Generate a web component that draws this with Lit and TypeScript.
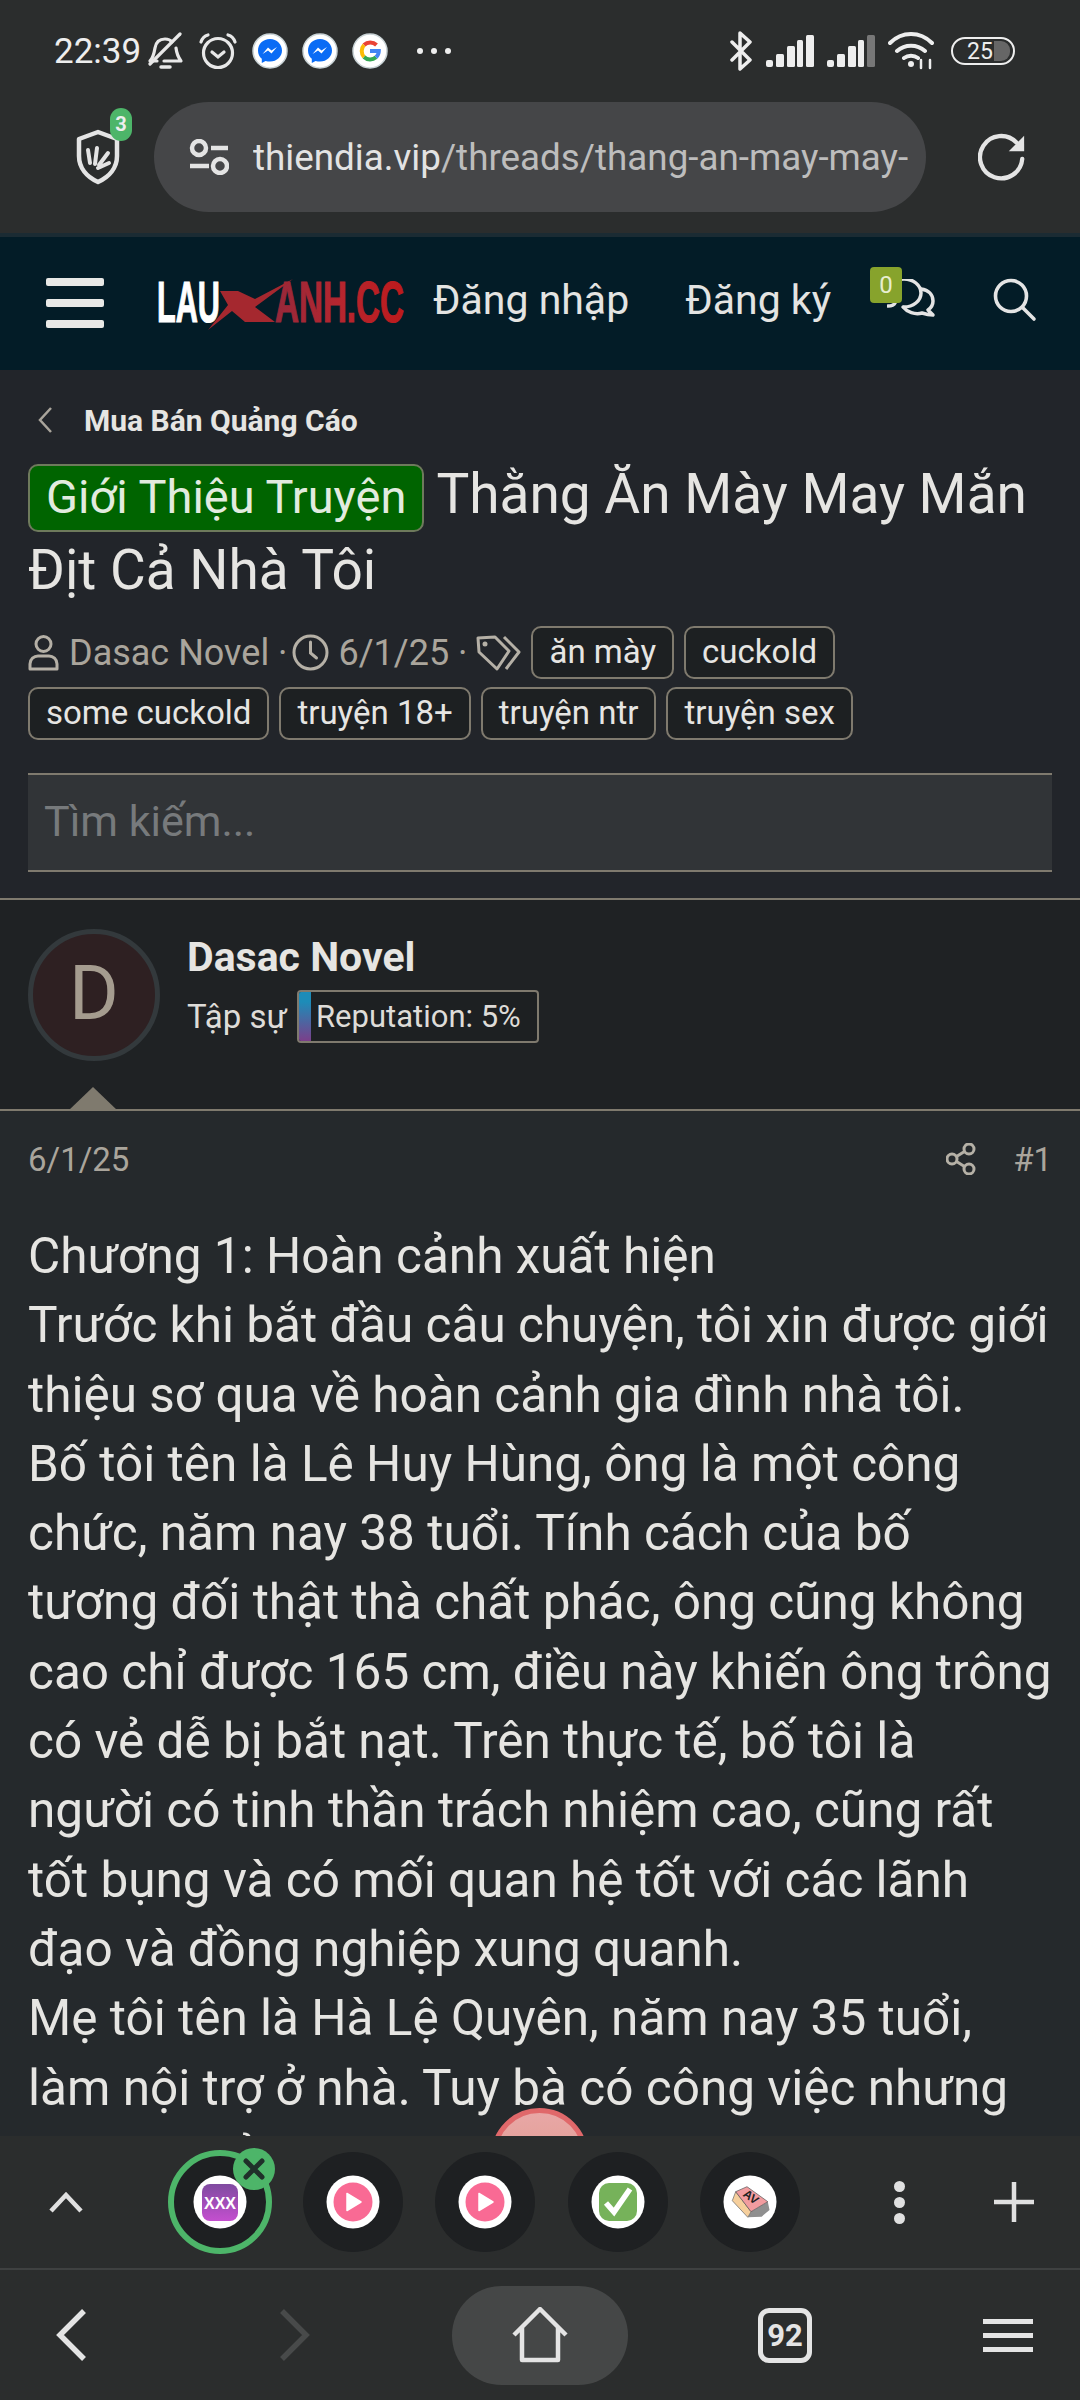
import { LitElement, html, css, svg } from "lit";
import { customElement } from "lit/decorators.js";

const messenger = svg`<svg class="nico" viewBox="0 0 36 36"><circle cx="18" cy="18" r="17" fill="#fff" stroke="#c9d3d6" stroke-width="1.5"/><path d="M18 6C11 6 6 11 6 17.500c0 3.500 1.400 6.300 3.800 8.300V30l3.800-2.100c1.400.4 2.900.6 4.400.6 7 0 12-5 12-11S25 6 18 6z" fill="#0a6cf5"/><path d="M10.500 21l5.500-6.500 3.500 3 5.500-3.500-5.500 6.500-3.500-3z" fill="#fff"/></svg>`;

const pinkTab = svg`<svg class="tabico" viewBox="0 0 54 54"><circle cx="27" cy="27" r="26.500" fill="#fff"/><circle cx="27" cy="27" r="19.500" fill="#f96a94"/><path d="M21 18.500v17l14-8.500z" fill="#fff" stroke="#fff" stroke-width="1.500" stroke-linejoin="round"/></svg>`;

@customElement("app-root")
export class AppRoot extends LitElement {
  static styles = css`
    :host { display: block; width: 1080px; height: 2400px; overflow: hidden; font-family: Roboto, "Noto Sans", sans-serif; color: #e7e6e3; background: #25292c; }
    svg { display: block; flex: none; }
    .page { position: relative; display: flex; flex-direction: column; height: 2400px; }
    .top { background: #2b2d2d; flex: none; height: 237px; box-sizing: border-box; border-bottom: 4px solid #1b2b33; }
    .status { height: 102px; padding: 0 0 0 54px; display: flex; align-items: center; box-sizing: border-box; color: #eee; }
    .time { font-size: 35px; width: 94px; flex: none; }
    .sleft { display: flex; align-items: center; gap: 14px; }
    .sleft .nico { width: 36px; height: 36px; }
    .dots { display: flex; gap: 8px; margin-left: 29px; }
    .dots i { width: 6px; height: 6px; border-radius: 50%; background: #eee; }
    .sright { margin-left: auto; margin-right: 65px; display: flex; align-items: center; gap: 13px; }
    .batt { width: 64px; height: 28px; box-sizing: border-box; border: 2px solid #eee; border-radius: 14px; position: relative; font-size: 23px; line-height: 25px; padding-left: 14px; overflow: hidden; margin-left: 4px; }
    .batt b { position: absolute; right: 3px; top: 2px; width: 16px; height: 20px; background: #666; border-radius: 0 9px 9px 0; }
    .urlrow { height: 131px; display: flex; align-items: flex-start; }
    .shield { position: relative; width: 154px; height: 110px; flex: none; }
    .shield svg { position: absolute; left: 76px; top: 27px; }
    .shield span { position: absolute; left: 110px; top: 6px; width: 22px; height: 33px; border-radius: 11px; background: #4db569; font-size: 20px; font-weight: 700; text-align: center; line-height: 33px; color: #eee; }
    .pill { width: 772px; height: 110px; border-radius: 55px; background: #454648; display: flex; align-items: center; padding-left: 35px; box-sizing: border-box; overflow: hidden; flex: none; }
    .url { margin-left: 24px; font-size: 36.800px; color: #bdbdbd; white-space: nowrap; width: 655px; flex: none; overflow: hidden; }
    .url b { font-weight: 400; color: #e3e3e3; }
    .reload { margin: 30px 0 0 52px; }

    .nav { flex: none; height: 133px; background: #031c27; display: flex; align-items: center; position: relative; }
    .burger { margin-left: 46px; width: 58px; display: flex; flex-direction: column; gap: 13px; margin-top: -1px; flex: none; }
    .burger i { height: 8px; border-radius: 2px; background: #e8e8e6; }
    .logo { margin-left: 53px; }
    .logo text { stroke-width: 1.200px; }
    .navlink { font-size: 41px; color: #e4e4e2; white-space: nowrap; flex: none; margin-bottom: 8px; }
    .l1 { margin-left: 29px; }
    .l2 { margin-left: 56px; }
    .chat { position: relative; margin-left: 56px; width: 50px; flex: none; margin-bottom: 9px; }
    .badge0 { position: absolute; left: -17px; top: -12px; width: 32px; height: 36px; border-radius: 4px; background: #87a32c; color: #e8eed0; font-size: 24px; text-align: center; line-height: 36px; }
    .search { margin-left: 56px; margin-bottom: 8px; }

    .main { flex: 1; min-height: 0; overflow: hidden; display: flex; flex-direction: column; }
    .head { background: #22252a; padding: 30px 28px 0; height: 530px; box-sizing: border-box; flex: none; border-bottom: 2px solid #7f7a6e; }
    .crumb { display: flex; align-items: center; height: 40px; font-size: 30px; font-weight: 700; color: #e6e5e2; gap: 32px; padding-left: 10px; }
    h1 { margin: 16px 0 0; font-weight: 400; font-size: 55px; line-height: 76px; color: #e6e5e2; }
    .prefix { display: inline-block; height: 68px; line-height: 62px; box-sizing: border-box; font-size: 47px; padding: 0 16px; background: #006400; border: 2px solid #6e7a5c; border-radius: 10px; color: #e2ebdf; margin-right: 12px; vertical-align: 0; }
    .meta { display: flex; flex-wrap: wrap; gap: 8px 10px; margin-top: 18px; align-items: center; color: #aaa59c; font-size: 36px; }
    .mi { display: flex; align-items: center; white-space: nowrap; height: 52px; }
    .mi .who { margin-left: 10px; }
    .mi .clock { margin-left: 5px; }
    .mi .when { margin-left: 9px; }
    .mi .tagic { margin-left: 9px; }
    .tag { height: 53px; box-sizing: border-box; line-height: 47px; padding: 0 16px; border: 2px solid #7f7a6e; border-radius: 10px; background: #1d2022; color: #e6e5e2; font-size: 33px; white-space: nowrap; }
    .find { margin-top: 33px; height: 99px; box-sizing: border-box; background: #313437; border-top: 2px solid #7f7a6e; border-bottom: 2px solid #7f7a6e; font-size: 43px; color: #777a7c; line-height: 92px; padding-left: 16px; }

    .user { background: #1f2224; height: 211px; flex: none; box-sizing: border-box; border-bottom: 2px solid #7f7a6e; padding: 29px 28px 0; display: flex; gap: 27px; position: relative; }
    .avatar { width: 132px; height: 132px; border-radius: 50%; box-sizing: border-box; border: 5px solid #33393c; background: #2e2022; color: #a59c8f; font-size: 76px; line-height: 118px; text-align: center; flex: none; }
    .uname { font-size: 41px; font-weight: 700; line-height: 44px; margin-top: 6px; color: #e6e5e2; }
    .urow { display: flex; align-items: center; gap: 10px; font-size: 33px; margin-top: 11px; color: #dedcd8; }
    .rep { width: 242px; height: 53px; box-sizing: border-box; border: 2px solid #7f7a6e; border-radius: 4px; background: #1d2022; display: flex; align-items: center; font-size: 31px; overflow: hidden; white-space: nowrap; gap: 5px; }
    .rep i { width: 12px; height: 100%; background: linear-gradient(#1d8cb8 20%, #7b3f8a); flex: none; }
    .caret { position: absolute; left: 68px; bottom: -2px; width: 0; height: 0; border-left: 25px solid transparent; border-right: 25px solid transparent; border-bottom: 24px solid #7f7a6e; }

    .post { padding: 0 28px; flex: 1; background: #25292c; }
    .pmeta { height: 62px; margin-top: 17px; display: flex; align-items: center; font-size: 33px; color: #aaa59c; }
    .pmeta .share { margin-left: auto; margin-right: 37px; }
    .body { margin-top: 32px; font-size: 49.500px; line-height: 69.300px; color: #e6e5e2; }

    .bubble { position: absolute; left: 491px; top: 2108px; width: 97px; height: 97px; box-sizing: border-box; border-radius: 50%; border: 5px solid #e0686a; background: linear-gradient(#e8a7a6, #d98); }

    .tabs { position: relative; flex: none; height: 134px; background: #2b2d2d; border-bottom: 2px solid #3f4141; box-sizing: border-box; display: flex; align-items: center; }
    .up { margin-left: 49px; margin-top: -1px; }
    .tablist { display: flex; gap: 32.500px; margin-left: 87px; flex: none; }
    .tab { width: 100px; height: 100px; border-radius: 50%; background: #1e2022; display: flex; align-items: center; justify-content: center; position: relative; flex: none; }
    .tab.active { outline: 6px solid #4db569; outline-offset: -4px; }
    .close { position: absolute; left: 63px; top: -4px; width: 42px; height: 42px; }
    .tabico { width: 54px; height: 54px; }
    .kebab { margin-left: 94px; display: flex; flex-direction: column; gap: 5px; flex: none; }
    .kebab i { width: 11px; height: 11px; border-radius: 50%; background: #e0e0e0; }
    .plus { margin-left: 89px; }

    .bottom { flex: none; height: 130px; background: #2b2d2d; display: flex; align-items: center; }
    .back { margin-left: 56px; }
    .fwd { margin-left: 194px; }
    .home { margin-left: 142px; width: 176px; height: 99px; border-radius: 50px; background: #454747; display: flex; align-items: center; justify-content: center; flex: none; }
    .count { margin-left: 130px; width: 54px; height: 55px; box-sizing: border-box; border: 5px solid #e4e4e4; border-radius: 11px; font-size: 31px; font-weight: 700; text-align: center; line-height: 45px; color: #e4e4e4; flex: none; }
    .menu { margin-left: 171px; width: 50px; display: flex; flex-direction: column; gap: 9px; flex: none; }
    .menu i { height: 5px; background: #e4e4e4; }
  `;

  render() {
    return html`<div class="page">
      <div class="top">
        <div class="status">
          <div class="time">22:39</div>
          <div class="sleft">
            <svg width="36" height="38" viewBox="0 0 36 38" fill="none" stroke="#e8e8e8" stroke-width="3.200" stroke-linecap="round" stroke-linejoin="round"><path d="M9 29H2c3-3 4-7 5-13 .8-5 4-9 10-9 3 0 5.500 1 7 3M28 16c.6 5 2 9 5 13H16"/><path d="M2 32L32 2"/><path d="M13 35h9" stroke-width="3.500"/></svg>
            <svg width="40" height="38" viewBox="0 0 40 38" fill="none" stroke="#e8e8e8" stroke-width="3.200" stroke-linecap="round"><circle cx="20" cy="21" r="14.500"/><path d="M14 20l6 5 6-5"/><path d="M3 10c1-3 3-6 7-7M37 10c-1-3-3-6-7-7"/></svg>
            ${messenger}${messenger}
            <svg class="nico" viewBox="0 0 36 36"><circle cx="18" cy="18" r="17" fill="#fff" stroke="#c9d3d6" stroke-width="1.500"/><g fill="none" stroke-width="4"><path d="M24.500 12a9 9 0 0 0-12.500 0" stroke="#ea4335"/><path d="M12 12a9 9 0 0 0 0 12" stroke="#fbbc05"/><path d="M12 24a9 9 0 0 0 12 .3" stroke="#34a853"/><path d="M24 24.300a9 9 0 0 0 2.800-6.300H18" stroke="#4285f4"/></g></svg>
          </div>
          <div class="dots"><i></i><i></i><i></i></div>
          <div class="sright">
            <svg width="24" height="40" viewBox="0 0 24 40" fill="none" stroke="#eee" stroke-width="3.500" stroke-linecap="round" stroke-linejoin="round"><path d="M3 11l18 18-10 9V2l10 9L3 29"/></svg>
            <svg width="48" height="32" viewBox="0 0 48 32" fill="#eee"><rect x="0" y="25" width="7" height="7" rx="2"/><rect x="10" y="19" width="8" height="13" rx="1.500"/><rect x="21" y="11" width="8" height="21" rx="1.500"/><rect x="31" y="5" width="6" height="27" rx="1.500"/><rect x="40" y="0" width="8" height="32" rx="1.500"/></svg>
            <svg width="48" height="32" viewBox="0 0 48 32" fill="#eee"><rect x="0" y="25" width="7" height="7" rx="2"/><rect x="10" y="19" width="8" height="13" rx="1.500"/><rect x="21" y="11" width="8" height="21" rx="1.500"/><rect x="31" y="5" width="6" height="27" rx="1.500"/><rect x="40" y="0" width="8" height="32" rx="1.500" fill="#777"/></svg>
            <svg width="46" height="38" viewBox="0 0 46 38" fill="none" stroke="#eee" stroke-width="4" stroke-linecap="round"><path d="M2 11c12-12 30-12 42 0M9 19c8-7 20-7 28 0M16 26c4-3 10-3 14 0"/><circle cx="23" cy="32" r="3" fill="#eee" stroke="none"/><path d="M33 28v8M42 28v8" stroke-width="2.500"/></svg>
            <div class="batt">25<b></b></div>
          </div>
        </div>
        <div class="urlrow">
          <div class="shield">
            <svg width="44" height="56" viewBox="0 0 44 56" fill="none" stroke="#e4e4e4"><path d="M22 3L3 10v17c0 12 8 21 19 26 11-5 19-14 19-26V10z" stroke-width="4.500" stroke-linejoin="round"/><path d="M12 21l2 13M21 19l-2 16M32 24l-9 12M33 34l-11 5" stroke-width="4" stroke-linecap="round"/></svg>
            <span>3</span>
          </div>
          <div class="pill">
            <svg width="40" height="36" viewBox="0 0 40 36" fill="none" stroke="#e4e4e4" stroke-width="4.500"><circle cx="10" cy="9" r="7"/><path d="M22 9h17M1 27h19"/><circle cx="31" cy="27" r="7"/></svg>
            <div class="url"><b>thiendia.vip</b>/threads/thang-an-may-may-</div>
          </div>
          <svg class="reload" width="50" height="50" viewBox="0 0 52 52" fill="none" stroke="#e4e4e4" stroke-width="4.500" stroke-linecap="round"><path d="M46 28a22 22 0 1 1-6-17"/><path d="M48 4v16H32z" fill="#e4e4e4" stroke="none"/></svg>
        </div>
      </div>

      <div class="nav">
        <div class="burger"><i></i><i></i><i></i></div>
        <svg class="logo" width="247" height="56" viewBox="0 0 247 56">
          <defs><linearGradient id="rd" x1="0" y1="0" x2="1" y2="0"><stop offset="0" stop-color="#96283a"/><stop offset=".5" stop-color="#b5262f"/><stop offset="1" stop-color="#bd1a1c"/></linearGradient></defs>
          <text x="0" y="46" font-family="Liberation Sans" font-weight="700" font-size="58" fill="#fff" stroke="#fff" textLength="63" lengthAdjust="spacingAndGlyphs">LAU</text>
          <text x="118" y="46" font-family="Liberation Sans" font-weight="700" font-size="58" fill="url(#rd)" stroke="url(#rd)" textLength="129" lengthAdjust="spacingAndGlyphs">ANH.CC</text>
          <path d="M63 15h18l17 8 38-20-38 28 20 15H88L75 35 51 54l20-25z" fill="#a5282f"/>
        </svg>
        <div class="navlink l1">Đăng nhập</div>
        <div class="navlink l2">Đăng ký</div>
        <div class="chat">
          <svg width="50" height="40" viewBox="0 0 50 40" fill="none" stroke="#e4e4e4" stroke-width="3.500" stroke-linecap="round" stroke-linejoin="round"><path d="M1 27c3 0 6-1 7-3C3 21 0 18 0 14 0 6 8 0 17 0c9 0 17 6 17 14s-8 14-17 14"/><path d="M34 10c8 1 12 6 12 12 0 4-2 7-5 9l5 5c-4 0-8-1-11-2-7 2-15-1-19-6"/></svg>
          <div class="badge0">0</div>
        </div>
        <svg class="search" width="44" height="44" viewBox="0 0 44 44" fill="none" stroke="#e4e4e4" stroke-width="3.600" stroke-linecap="round"><circle cx="18" cy="18" r="15.500"/><path d="M29.500 29.500L41 41"/></svg>
      </div>

      <div class="main">
        <div class="head">
          <div class="crumb">
            <svg width="14" height="26" viewBox="0 0 14 26" fill="none" stroke="#a9a49b" stroke-width="2.500"><path d="M13 1L2 13l11 12"/></svg>
            <span>Mua Bán Quảng Cáo</span>
          </div>
          <h1><span class="prefix">Giới Thiệu Truyện</span>Thằng Ăn Mày May Mắn Địt Cả Nhà Tôi</h1>
          <div class="meta">
            <div class="mi">
              <svg width="31" height="36" viewBox="0 0 31 36" fill="none" stroke="#b5b0a6" stroke-width="3"><circle cx="15.500" cy="9" r="7.500"/><path d="M2 34v-5c0-5 4-8 8-8h11c4 0 8 3 8 8v5z" stroke-linejoin="round"/></svg>
              <span class="who">Dasac Novel ·</span>
              <svg class="clock" width="37" height="37" viewBox="0 0 37 37" fill="none" stroke="#b5b0a6" stroke-width="3" stroke-linecap="round"><circle cx="18.500" cy="18.500" r="16.500"/><path d="M18.500 8v11l6 5"/></svg>
              <span class="when">6/1/25 ·</span>
              <svg class="tagic" width="45" height="36" viewBox="0 0 45 36" fill="none" stroke="#b5b0a6" stroke-width="3" stroke-linejoin="round"><path d="M2 3l17-1 14 14-12 18L3 17z"/><path d="M28 2l15 15-13 17"/><circle cx="9" cy="9" r="2.500" fill="#b5b0a6" stroke="none"/></svg>
            </div>
            <div class="tag">ăn mày</div><div class="tag">cuckold</div>
            <div class="tag">some cuckold</div><div class="tag">truyện 18+</div><div class="tag">truyện ntr</div><div class="tag">truyện sex</div>
          </div>
          <div class="find">Tìm kiếm...</div>
        </div>

        <div class="user">
          <div class="avatar">D</div>
          <div>
            <div class="uname">Dasac Novel</div>
            <div class="urow"><span>Tập sự</span><div class="rep"><i></i><span>Reputation: 5%</span></div></div>
          </div>
          <div class="caret"></div>
        </div>

        <div class="post">
          <div class="pmeta">
            <span>6/1/25</span>
            <svg class="share" width="30" height="32" viewBox="0 0 30 32" fill="none" stroke="#b5b0a6" stroke-width="3"><circle cx="23" cy="6" r="5"/><circle cx="6" cy="16" r="5"/><circle cx="23" cy="26" r="5"/><path d="M10.500 13.500l8-5M10.500 18.500l8 5"/></svg>
            <span>#1</span>
          </div>
          <div class="body">Chương 1: Hoàn cảnh xuất hiện<br>Trước khi bắt đầu câu chuyện, tôi xin được giới thiệu sơ qua về hoàn cảnh gia đình nhà tôi.<br>Bố tôi tên là Lê Huy Hùng, ông là một công chức, năm nay 38 tuổi. Tính cách của bố tương đối thật thà chất phác, ông cũng không cao chỉ được 165 cm, điều này khiến ông trông có vẻ dễ bị bắt nạt. Trên thực tế, bố tôi là người có tinh thần trách nhiệm cao, cũng rất tốt bụng và có mối quan hệ tốt với các lãnh đạo và đồng nghiệp xung quanh.<br>Mẹ tôi tên là Hà Lệ Quyên, năm nay 35 tuổi, làm nội trợ ở nhà. Tuy bà có công việc nhưng không phải đi làm, bà ở nhà chăm lo cho gia đình.</div>
        </div>
      </div>

      <div class="bubble"></div>

      <div class="tabs">
        <svg class="up" width="34" height="22" viewBox="0 0 34 22" fill="none" stroke="#e0e0e0" stroke-width="4.500"><path d="M2 20L17 4l15 16"/></svg>
        <div class="tablist">
          <div class="tab active">
            <svg class="tabico" viewBox="0 0 54 54"><defs><linearGradient id="xg" x1="0" y1="0" x2="0" y2="1"><stop offset="0" stop-color="#7f4ba0"/><stop offset="1" stop-color="#c44fcf"/></linearGradient></defs><circle cx="27" cy="27" r="26.500" fill="#fff"/><rect x="9" y="9" width="36" height="37" rx="8" fill="url(#xg)"/><text x="27" y="34" text-anchor="middle" font-family="Liberation Sans" font-weight="700" font-size="17" fill="#fff" textLength="32" lengthAdjust="spacingAndGlyphs">XXX</text></svg>
            <svg class="close" viewBox="0 0 42 42"><circle cx="21" cy="21" r="21" fill="#4db569"/><path d="M13 13l16 16M29 13L13 29" stroke="#20302a" stroke-width="5" stroke-linecap="round"/></svg>
          </div>
          <div class="tab">${pinkTab}</div>
          <div class="tab">${pinkTab}</div>
          <div class="tab">
            <svg class="tabico" viewBox="0 0 54 54"><circle cx="27" cy="27" r="26.500" fill="#fff"/><rect x="8" y="8" width="38" height="38" rx="10" fill="#76b25a"/><path d="M15 28l8 9 16-23" fill="none" stroke="#fff" stroke-width="5.500"/></svg>
          </div>
          <div class="tab">
            <svg class="tabico" viewBox="0 0 54 54"><circle cx="27" cy="27" r="26.500" fill="#fff"/><path d="M24.800 42.300L28 36.700 44.800 26.700 46.500 35 38.600 41.700z" fill="#8f8f8f"/><path d="M9.300 25.700L12.700 16.700 28 36.700 24.800 42.300z" fill="#f6cf9c" stroke="#666" stroke-width=".7"/><path d="M12.700 16.700L24 11.700 44.800 26.700 28 36.700z" fill="#f29c9f" stroke="#555" stroke-width=".7"/><text x="28" y="26" transform="rotate(36 28 22)" text-anchor="middle" font-family="Liberation Sans" font-weight="700" font-size="12" fill="#222">AV</text></svg>
          </div>
        </div>
        <div class="kebab"><i></i><i></i><i></i></div>
        <svg class="plus" width="40" height="40" viewBox="0 0 40 40" stroke="#e0e0e0" stroke-width="4.500"><path d="M20 0v40M0 20h40"/></svg>
      </div>

      <div class="bottom">
        <svg class="back" width="30" height="52" viewBox="0 0 30 52" fill="none" stroke="#e4e4e4" stroke-width="5.500"><path d="M28 2L4 26l24 24"/></svg>
        <svg class="fwd" width="30" height="52" viewBox="0 0 30 52" fill="none" stroke="#484a4a" stroke-width="5.500"><path d="M2 2l24 24L2 50"/></svg>
        <div class="home">
          <svg width="56" height="56" viewBox="0 0 56 56" fill="none" stroke="#e4e4e4" stroke-width="4.500" stroke-linejoin="round"><path d="M2 28L28 2l26 26M10 21v32h36V21"/></svg>
        </div>
        <div class="count">92</div>
        <div class="menu"><i></i><i></i><i></i></div>
      </div>
    </div>`;
  }
}
